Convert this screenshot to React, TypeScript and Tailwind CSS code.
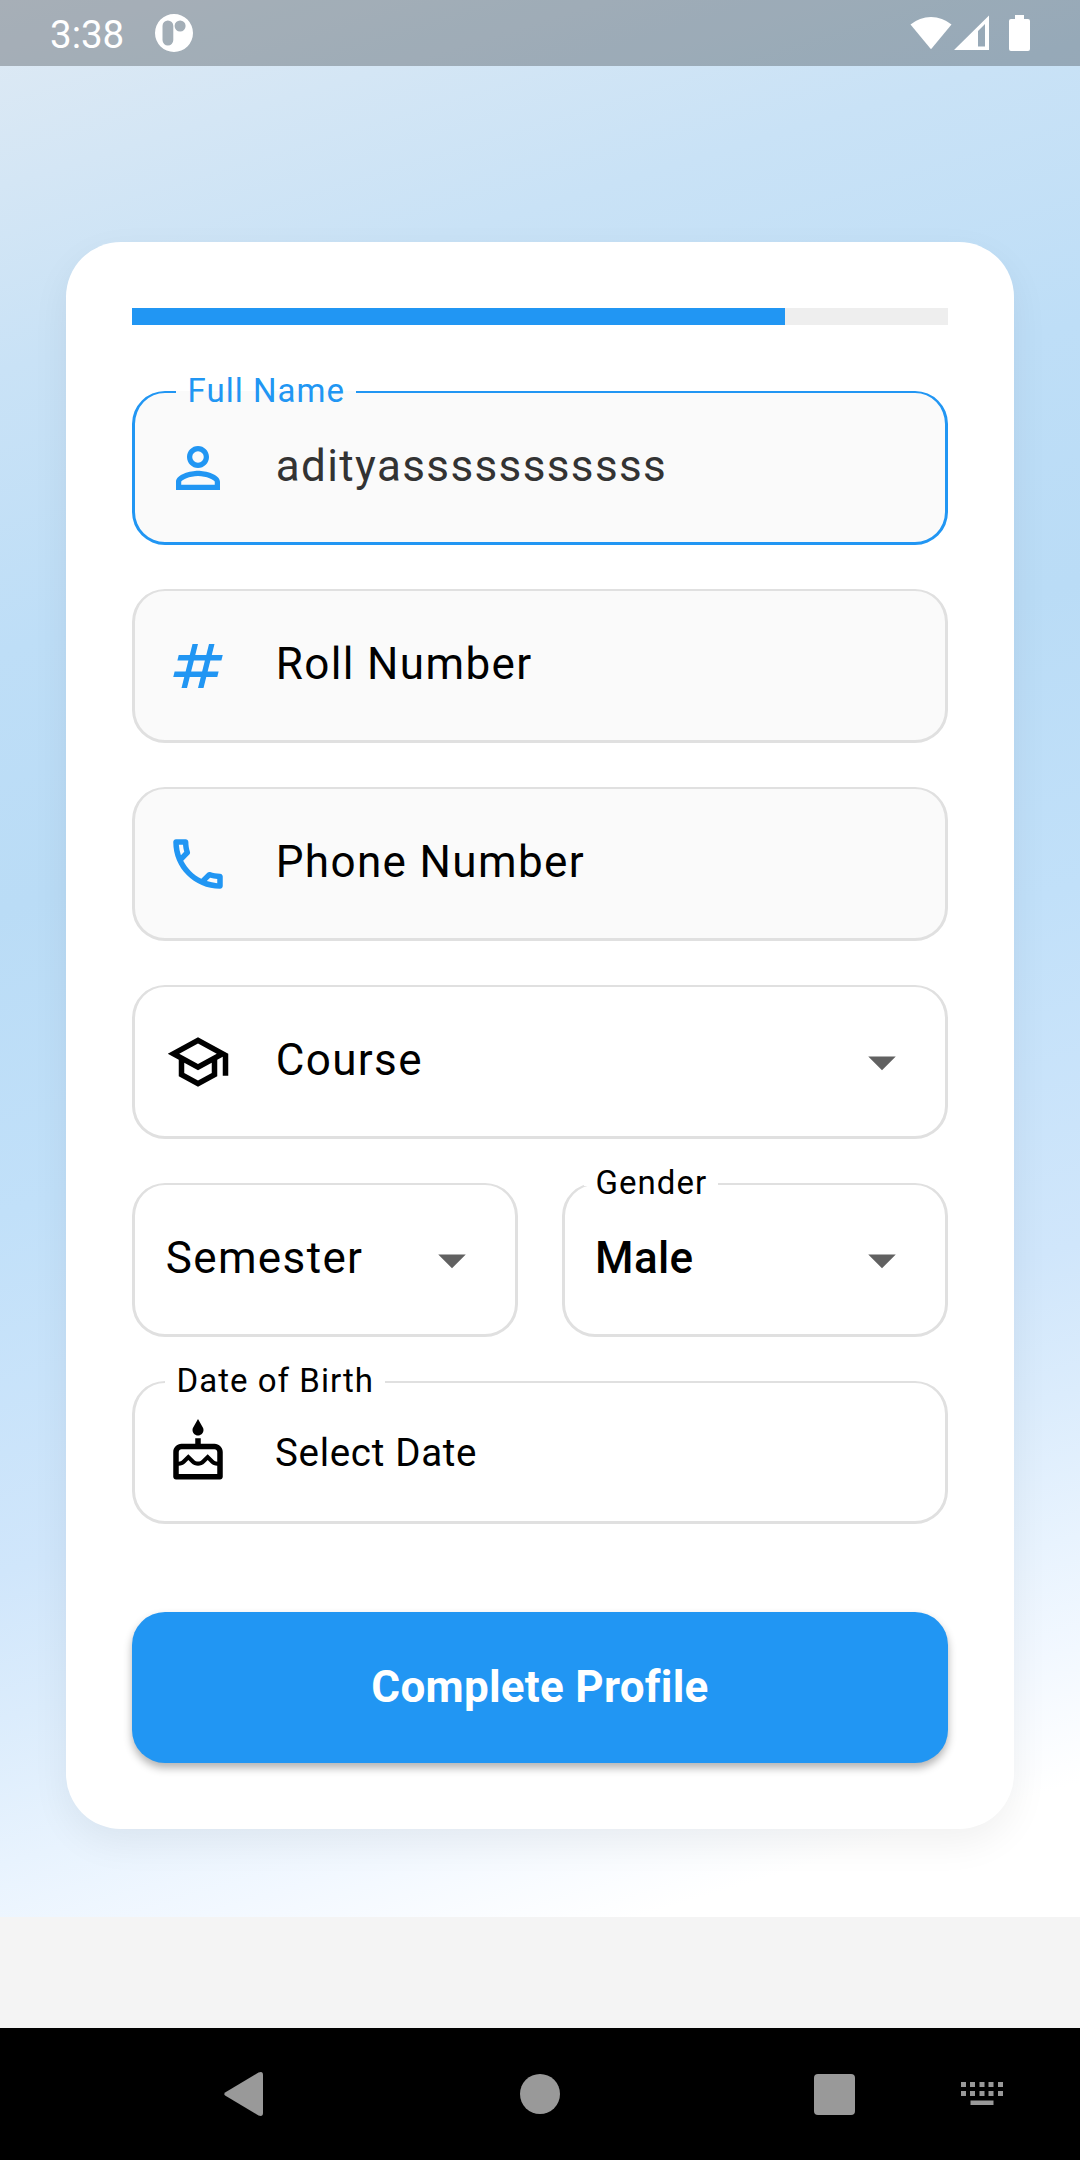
import type { ReactNode } from "react";

const ICONS = {
  person:
    "M12 5.9a2.1 2.1 0 1 1 0 4.2 2.1 2.1 0 0 1 0-4.2m0 9c2.97 0 6.1 1.46 6.1 2.1v1.1H5.9V17c0-.64 3.13-2.1 6.1-2.1M12 4C9.79 4 8 5.79 8 8s1.79 4 4 4 4-1.79 4-4-1.79-4-4-4zm0 9c-2.67 0-8 1.34-8 4v3h16v-3c0-2.66-5.33-4-8-4z",
  numbers:
    "M20.5 10 21 8h-4l1-4h-2l-1 4h-4l1-4h-2L9 8H5l-.5 2h4l-1 4h-4L3 16h4l-1 4h2l1-4h4l-1 4h2l1-4h4l.5-2h-4l1-4h4zm-7 4h-4l1-4h4l-1 4z",
  phone:
    "M6.54 5c.06.89.21 1.76.45 2.59l-1.2 1.2c-.41-1.2-.67-2.47-.76-3.79h1.51m9.86 12.02c.85.24 1.72.39 2.6.45v1.49c-1.32-.09-2.59-.35-3.8-.75l1.2-1.19M7.5 3H4c-.55 0-1 .45-1 1 0 9.39 7.61 17 17 17 .55 0 1-.45 1-1v-3.49c0-.55-.45-1-1-1-1.24 0-2.45-.2-3.57-.57-.1-.04-.21-.05-.31-.05-.26 0-.51.1-.71.29l-2.2 2.2c-2.83-1.45-5.15-3.76-6.59-6.59l2.2-2.2c.28-.28.36-.67.25-1.02C8.7 6.45 8.5 5.25 8.5 4c0-.55-.45-1-1-1z",
  school:
    "M12 3L1 9l4 2.18v6L12 21l7-3.82v-6l2-1.09V17h2V9L12 3zm6.82 6L12 12.72 5.18 9 12 5.28 18.82 9zM17 15.99l-5 2.73-5-2.73v-3.72L12 15l5-2.73v3.72z",
  cake: "M12 6c1.11 0 2-.9 2-2 0-.38-.1-.73-.29-1.03L12 0l-1.71 2.97c-.19.3-.29.65-.29 1.03 0 1.1.9 2 2 2zm6 3h-5V7h-2v2H6c-1.66 0-3 1.34-3 3v9c0 .55.45 1 1 1h16c.55 0 1-.45 1-1v-9c0-1.66-1.34-3-3-3zm1 11H5v-3c.9-.01 1.76-.37 2.4-1.01l1.09-1.07 1.07 1.07c1.31 1.31 3.59 1.3 4.89 0l1.08-1.07 1.07 1.07c.64.64 1.5 1 2.4 1.01v3zm0-4.5c-.51-.01-.99-.2-1.35-.57l-2.13-2.13-2.14 2.13c-.74.74-2.03.74-2.77 0L8.48 12.8l-2.14 2.13c-.35.36-.83.56-1.34.57V12c0-.55.45-1 1-1h12c.55 0 1 .45 1 1v3.5z",
  arrow: "M7 10l5 5 5-5z",
};

function Icon({ name, className = "" }: { name: keyof typeof ICONS; className?: string }) {
  return (
    <svg viewBox="0 0 24 24" fill="currentColor" className={`size-[66px] shrink-0 ${className}`}>
      <path d={ICONS[name]} />
    </svg>
  );
}

type FieldProps = {
  icon?: keyof typeof ICONS;
  label?: string;
  labelClass?: string;
  filled?: boolean;
  active?: boolean;
  dropdown?: boolean;
  className?: string;
  textClass?: string;
  children: ReactNode;
};

function Field({
  icon,
  label,
  labelClass = "",
  filled,
  active,
  dropdown,
  className = "h-[154px]",
  textClass = "pb-[4px] pl-[0.7px]",
  children,
}: FieldProps) {
  return (
    <div
      className={`relative flex items-center rounded-[33px] border-[3px] border-t-2 pr-[30px] pl-[30px] ${
        active ? "border-[#2196f3]" : "border-[#e0e0e0]"
      } ${filled ? "bg-[#fafafa]" : "bg-white"} ${className}`}
    >
      {label && (
        <div className={`absolute -top-[2px] flex h-[3px] items-center pr-[11px] pl-[11.5px] ${filled ? "bg-[#fafafa]" : "bg-white"} ${labelClass}`}>
          <span className="pb-[4px] text-[33px] leading-none tracking-[1.03px] whitespace-nowrap">{label}</span>
        </div>
      )}
      {icon && <Icon name={icon} className={`mr-[44px] ${filled ? "text-[#2196f3]" : "text-black"}`} />}
      <span className={`flex-1 whitespace-nowrap ${textClass}`}>{children}</span>
      {dropdown && <Icon name="arrow" className="text-[#616161]" />}
    </div>
  );
}

function StatusBar() {
  return (
    <header className="flex h-[66px] shrink-0 items-center bg-black/25 pr-[50px] pl-[50px] text-white">
      <span className="pt-[4px] text-[38.5px] leading-none">3:38</span>
      <svg viewBox="0 0 40 40" className="ml-[30px] size-[40px]">
        <path
          fill="currentColor"
          fillRule="evenodd"
          d="M20 1a19 19 0 1 1 0 38 19 19 0 0 1 0-38zM13.900 7.500a5.400 5.400 0 0 0-5.400 5.400v14.200a5.400 5.400 0 0 0 10.800 0V12.900a5.400 5.400 0 0 0-5.400-5.400zM26.100 7.500a5.500 5.500 0 1 0 0 11 5.500 5.500 0 0 0 0-11z"
        />
      </svg>
      <div className="ml-auto flex items-center">
        <svg viewBox="0 0 42 36" className="h-[36px] w-[42px]" fill="currentColor">
          <path d="M0.500 9.500A32 32 0 0 1 41.500 9.500L21 34.300z" />
        </svg>
        <svg viewBox="0 0 35 36" className="ml-[2px] h-[36px] w-[35px]" fill="currentColor">
          <path fillRule="evenodd" d="M0 35L35 0.500V35zM24 16V31.500H31V9z" />
        </svg>
        <svg viewBox="0 0 21 36" className="ml-[20px] h-[36px] w-[21px]" fill="currentColor">
          <path d="M6 0h9v4H19a2 2 0 0 1 2 2V34a2 2 0 0 1-2 2H2a2 2 0 0 1-2-2V6a2 2 0 0 1 2-2h4z" />
        </svg>
      </div>
    </header>
  );
}

function NavigationBar() {
  return (
    <nav className="flex h-[132px] shrink-0 items-center bg-black text-[#999999]">
      <svg viewBox="0 0 40 46" className="ml-[224px] h-[46px] w-[40px]" fill="currentColor">
        <path d="M1.500 21.200 34.500 1.500Q39 -0.500 39 4V42Q39 46 34.500 44.500L1.500 24.800Q-1 23 1.500 21.200z" />
      </svg>
      <div className="ml-[256px] size-[40px] rounded-full bg-current" />
      <div className="ml-[254px] size-[41px] rounded-[4px] bg-current" />
      <svg viewBox="0 0 42 24" className="ml-[106px] h-[24px] w-[42px]" fill="currentColor">
        <path d="M0 0h5v5H0zM9 0h5v5H9zM18.500 0h5v5h-5zM27.500 0h5v5h-5zM37 0h5v5h-5zM0 9h5v5H0zM9 9h5v5H9zM18.500 9h5v5h-5zM27.500 9h5v5h-5zM37 9h5v5h-5zM9.500 18.500h23V23h-23z" />
      </svg>
    </nav>
  );
}

export default function App() {
  return (
    <div className="flex h-[2160px] w-[1080px] flex-col bg-[#f4f4f4] font-['Roboto',sans-serif] text-[44px] leading-none text-black">
      <div className="flex h-[1917px] flex-col bg-[linear-gradient(163deg,#dfeaf4_0%,#c9e2f6_16.5%,#bedef7_29%,#badcf6_40.5%,#c1e0f9_54%,#d0e6fb_70%,#dbecfc_76.5%,#e8f3fe_83%,#f2f8ff_88%,#ffffff_94%)]">
        <StatusBar />
        <main className="mx-[66px] mt-[176px] flex flex-col rounded-[55px] bg-white p-[66px] shadow-[0_14px_38px_rgba(0,0,0,0.06)]">
          <div className="h-[17px] bg-[#eeeeee]">
            <div className="h-full w-4/5 bg-[#2196f3]" />
          </div>
          <form className="mt-[66px] flex flex-col gap-[44px] tracking-[1.375px]">
            <Field icon="person" label="Full Name" labelClass="left-[41px] text-[#2196f3]" filled active>
              <span className="text-[#333333]">adityasssssssssss</span>
            </Field>
            <Field icon="numbers" filled>
              Roll Number
            </Field>
            <Field icon="phone" filled>
              Phone Number
            </Field>
            <Field icon="school" dropdown>
              Course
            </Field>
            <div className="grid grid-cols-2 gap-[44px]">
              <Field dropdown>Semester</Field>
              <Field label="Gender" labelClass="left-[19px]" textClass="pb-[4px]" dropdown>
                <span className="font-medium tracking-[0.4px]">Male</span>
              </Field>
            </div>
            <Field icon="cake" label="Date of Birth" labelClass="left-[30px]" className="h-[143px]" textClass="pb-[2px]">
              <span className="text-[38.5px] tracking-[0.69px]">Select Date</span>
            </Field>
          </form>
          <button className="mt-[88px] h-[151px] rounded-[33px] bg-[#2196f3] pb-px text-[44px] leading-none font-bold tracking-[0.275px] text-white shadow-[0_5px_8px_rgba(0,0,0,0.3)]">
            Complete Profile
          </button>
        </main>
      </div>
      <div className="flex-1" />
      <NavigationBar />
    </div>
  );
}
